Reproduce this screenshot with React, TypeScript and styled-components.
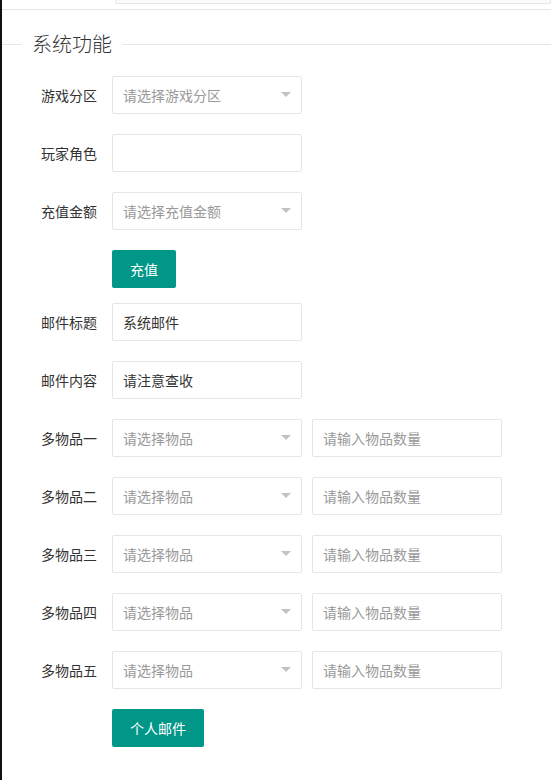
import React from 'react';
import styled, { createGlobalStyle } from 'styled-components';

const GlobalStyle = createGlobalStyle`
  html, body {
    margin: 0;
    padding: 0;
    background: #fff;
  }
  body {
    font-family: "Noto Sans CJK SC", "Noto Sans", Arial, sans-serif;
    font-size: 14px;
    color: #333;
  }
  * { box-sizing: border-box; }
`;

const Page = styled.div`
  width: 551px;
  height: 780px;
  border-left: 2px solid #111;
  overflow: hidden;
`;

const PrevInput = styled.div`
  margin-left: 113px;
  height: 4px;
  border: 1px solid #e6e6e6;
  border-top: none;
  border-radius: 0 0 2px 2px;
  background: #fafafa;
`;

const Divider = styled.hr`
  margin: 5px 0 0;
  height: 1px;
  border: none;
  background: #e6e6e6;
`;

const Field = styled.fieldset`
  margin: 22px 0 0;
  padding: 0;
  border: none;
  border-top: 1px solid #e6e6e6;
  min-width: 0;
`;

const Legend = styled.legend`
  margin-left: 20px;
  padding: 0 10px;
  font-size: 20px;
  font-weight: 300;
  line-height: 24px;
  color: #333;
`;

const Form = styled.div`
  padding-top: 20px;
`;

const Item = styled.div<{ $gap?: number }>`
  display: flex;
  align-items: center;
  margin-bottom: ${(p) => p.$gap ?? 20}px;
`;

const Label = styled.label`
  width: 110px;
  padding: 9px 15px;
  text-align: right;
  font-size: 14px;
  line-height: 20px;
  color: #333;
  flex-shrink: 0;
`;

const Box = styled.div<{ $mr?: number }>`
  position: relative;
  width: 190px;
  height: 38px;
  margin-right: ${(p) => p.$mr ?? 0}px;
  border: 1px solid #e6e6e6;
  border-radius: 2px;
  background: #fff;
  padding: 0 10px;
  display: flex;
  align-items: center;
  font-size: 14px;
  color: #333;
`;

const Placeholder = styled.span`
  color: #999;
`;

const Caret = styled.i`
  position: absolute;
  right: 10px;
  top: 50%;
  margin-top: -3px;
  width: 0;
  height: 0;
  border-width: 5px 5px 0;
  border-style: solid;
  border-color: #c2c2c2 transparent transparent;
`;

const Button = styled.button`
  margin-left: 110px;
  height: 38px;
  padding: 0 18px;
  border: none;
  border-radius: 2px;
  background: #009688;
  color: #fff;
  font-family: inherit;
  font-size: 14px;
  line-height: 38px;
  cursor: pointer;
`;

const Select = ({ placeholder }: { placeholder: string }) => (
  <Box $mr={10}>
    <Placeholder>{placeholder}</Placeholder>
    <Caret />
  </Box>
);

const items = ['多物品一', '多物品二', '多物品三', '多物品四', '多物品五'];

export default function App() {
  return (
    <>
      <GlobalStyle />
      <Page>
        <PrevInput />
        <Divider />
        <Field>
          <Legend>系统功能</Legend>
          <Form>
            <Item>
              <Label>游戏分区</Label>
              <Select placeholder="请选择游戏分区" />
            </Item>
            <Item>
              <Label>玩家角色</Label>
              <Box />
            </Item>
            <Item>
              <Label>充值金额</Label>
              <Select placeholder="请选择充值金额" />
            </Item>
            <Item $gap={15}>
              <Button>充值</Button>
            </Item>
            <Item>
              <Label>邮件标题</Label>
              <Box>系统邮件</Box>
            </Item>
            <Item>
              <Label>邮件内容</Label>
              <Box>请注意查收</Box>
            </Item>
            {items.map((name) => (
              <Item key={name}>
                <Label>{name}</Label>
                <Select placeholder="请选择物品" />
                <Box>
                  <Placeholder>请输入物品数量</Placeholder>
                </Box>
              </Item>
            ))}
            <Item>
              <Button>个人邮件</Button>
            </Item>
          </Form>
        </Field>
      </Page>
    </>
  );
}
